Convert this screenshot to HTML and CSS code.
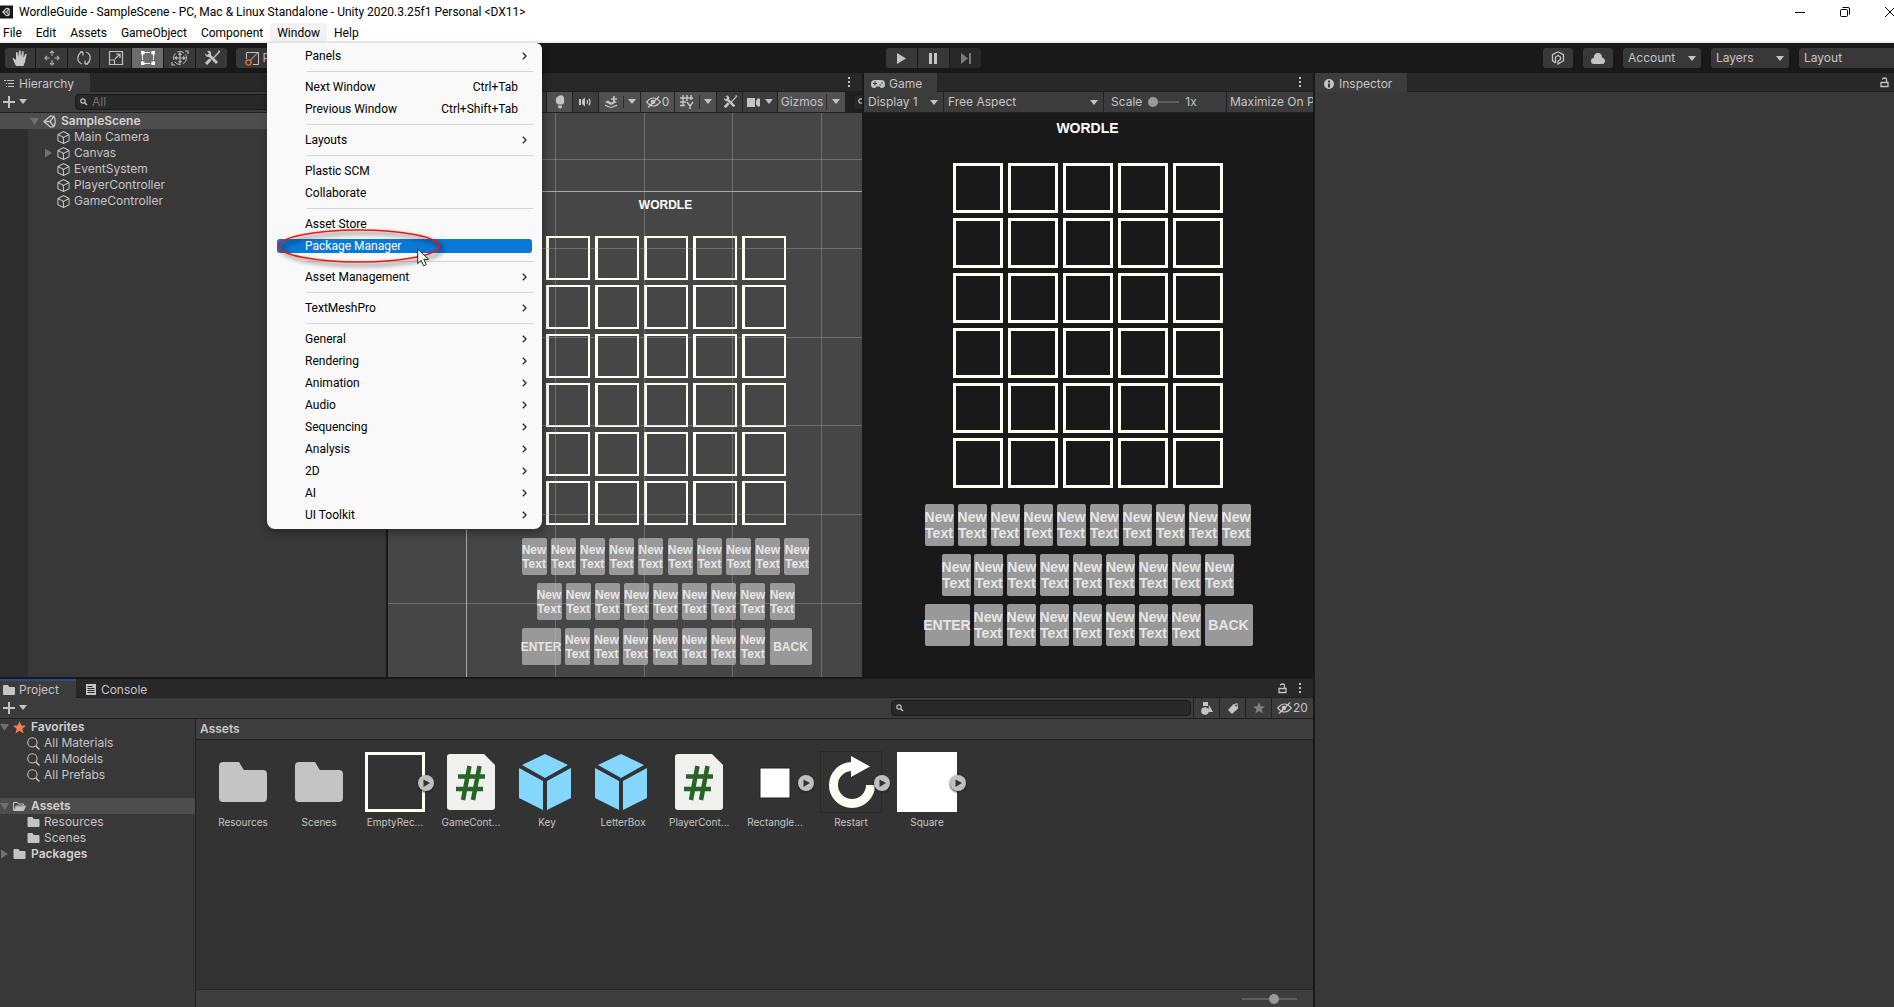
FILE: index.html
```html
<!DOCTYPE html>
<html lang="en">
<head>
<meta charset="utf-8">
<title>WordleGuide - SampleScene</title>
<link rel="stylesheet" href="styles.css">
</head>
<body>
<svg class="defs" aria-hidden="true">
  <symbol id="down" viewBox="0 0 8 6"><path d="M0 0h8L4 5z" fill="currentColor"/></symbol>
  <symbol id="fold-open" viewBox="0 0 10 10"><path d="M1 2h9L5.500 9z" fill="#707070"/></symbol>
  <symbol id="fold-shut" viewBox="0 0 10 10"><path d="M2 0.500v9L9 5z" fill="#707070"/></symbol>
  <symbol id="dots" viewBox="0 0 4 12"><path d="M1 1h2v2H1zM1 5h2v2H1zM1 9h2v2H1z" fill="currentColor"/></symbol>
  <symbol id="plus" viewBox="0 0 12 12"><path d="M6 0v12M0 6h12" stroke="currentColor" stroke-width="2"/></symbol>
  <symbol id="lock" viewBox="0 0 9 11"><path d="M1 5.500h7v4H1zM6.500 5.500v-3Q6.500 1 4.500 1T2.500 2.500" fill="none" stroke="currentColor" stroke-width="1.300"/></symbol>
  <symbol id="cube" viewBox="0 0 14 14"><path d="M7 .6l6 3.200v6.600L7 13.500 1 10.400V3.800zM1 3.800L7 7l6-3.200M7 7v6.500" fill="none" stroke="currentColor" stroke-width="1.100"/></symbol>
  <symbol id="unity" viewBox="0 0 14 14"><path d="M11.800 1.500L8 1 1 7l7 6 3.800-.5L13 9V5zM1 7h6.500M7.500 7l4.300-5.500M7.500 7l4.300 5.500" fill="none" stroke="currentColor" stroke-width="1.500"/></symbol>
  <symbol id="folder" viewBox="0 0 12 10"><path d="M0 1q0-1 1-1h4l1.200 2H11q1 0 1 1v6q0 1-1 1H1q-1 0-1-1z" fill="currentColor"/></symbol>
  <symbol id="folder-open" viewBox="0 0 13 10"><path d="M.5 9V1h4l1 1.500h5V4M1 9l2-4.500h9.500L10.500 9z" fill="none" stroke="currentColor"/><path d="M3.500 5h9l-2 4h-9z" fill="currentColor"/></symbol>
  <symbol id="mag" viewBox="0 0 12 12"><circle cx="5" cy="5" r="4.300" fill="none" stroke="currentColor"/><path d="M8 8l3.500 3.500" stroke="currentColor" stroke-width="1.400"/></symbol>
  <symbol id="find" viewBox="0 0 10 8"><circle cx="3" cy="3" r="2.200" fill="none" stroke="currentColor" stroke-width="1.200"/><path d="M4.500 4.500L7 7" stroke="currentColor" stroke-width="1.500"/></symbol>
  <symbol id="star" viewBox="0 0 12 12"><path d="M6 0l1.700 4.200 4.300.2-3.400 2.700L9.800 11.500 6 9 2.200 11.500l1.200-4.400L0 4.400l4.300-.2z" fill="currentColor"/></symbol>
  <symbol id="eye" viewBox="0 0 15 12"><path d="M.7 6Q4 2 7.500 2T14.300 6Q11 10 7.500 10T.7 6z" fill="none" stroke="currentColor" stroke-width="1.200"/><circle cx="7" cy="6" r="2.300" fill="currentColor"/><path d="M2 11.500L13 .5" stroke="currentColor" stroke-width="1.400"/></symbol>
  <symbol id="wrench" viewBox="0 0 16 16"><path d="M4.500 4.500l8.500 8.500" stroke="currentColor" stroke-width="2.800"/><path d="M.8 3L3 5.200 5 3.200 3 1Q6-.2 7 2.500T5 7Q1.500 7.500.8 3z" fill="currentColor"/><path d="M14.500.5l1 1L9.500 8M6 10.500L2.500 14" fill="none" stroke="currentColor" stroke-width="1.300"/><path d="M6.500 9.200L2 14" stroke="currentColor" stroke-width="3"/></symbol>
  <symbol id="more" viewBox="0 0 16 16"><circle cx="8" cy="8" r="8" fill="#c0c0c0"/><path d="M5.500 4.500v7.500L12 8z" fill="#333"/></symbol>
  <symbol id="chev" viewBox="0 0 5 8"><path d="M.8.8L4 4 .8 7.200" fill="none" stroke="#333" stroke-width="1.400"/></symbol>
  <symbol id="script" viewBox="0 0 60 60"><path d="M6 5q0-3 3-3h34l11 11v42q0 3-3 3H9q-3 0-3-3z" fill="#f0f0ee"/><path d="M28.500 14L22 48M38.500 14L32 48M17 24.500h27M15 37h27" stroke="#286428" stroke-width="4.500" fill="none"/></symbol>
  <symbol id="prefab" viewBox="0 0 60 60"><path d="M28 2l23 11-23 13L5 13zM2 16l24 13v29L2 46zM54 16v30L30 58V29z" fill="#84d6fd"/></symbol>
</svg>

<header class="titlebar">
  <svg class="app-icon" viewBox="0 0 14 14"><path d="M0 0h14v14H0z" fill="#181818"/><path d="M9.500 3.500L7 3 3 7l4 4 2.500-.5.5-2V5.500zM3 7h4M7 7l2.500-3.500M7 7l2.500 3.500" fill="none" stroke="#ddd" stroke-width="1.100"/></svg>
  <h1>WordleGuide - SampleScene - PC, Mac &amp; Linux Standalone - Unity 2020.3.25f1 Personal &lt;DX11&gt;</h1>
  <div class="win-buttons">
    <button aria-label="Minimize"><svg width="10" height="10"><path d="M0 5.500h10" stroke="#000"/></svg></button>
    <button aria-label="Restore"><svg width="10" height="10" viewBox="0 0 10 10"><rect x=".5" y="2.500" width="7" height="7" rx="1" fill="none" stroke="#000"/><path d="M2.500.5H8Q9.500.5 9.500 2v5.500" fill="none" stroke="#000"/></svg></button>
    <button aria-label="Close"><svg width="10" height="10"><path d="M0 0l10 10M10 0L0 10" stroke="#000"/></svg></button>
  </div>
</header>

<nav class="menubar">
  <button>File</button><button>Edit</button><button>Assets</button><button>GameObject</button><button>Component</button><button class="open">Window</button><button>Help</button>
  <div class="menu" role="menu">
    <button><span>Panels</span><svg class="chev"><use href="#chev"/></svg></button>
    <hr>
    <button><span>Next Window</span><kbd>Ctrl+Tab</kbd></button>
    <button><span>Previous Window</span><kbd>Ctrl+Shift+Tab</kbd></button>
    <hr>
    <button><span>Layouts</span><svg class="chev"><use href="#chev"/></svg></button>
    <hr>
    <button><span>Plastic SCM</span></button>
    <button><span>Collaborate</span></button>
    <hr>
    <button><span>Asset Store</span></button>
    <button class="current"><span>Package Manager</span></button>
    <hr>
    <button><span>Asset Management</span><svg class="chev"><use href="#chev"/></svg></button>
    <hr>
    <button><span>TextMeshPro</span><svg class="chev"><use href="#chev"/></svg></button>
    <hr>
    <button><span>General</span><svg class="chev"><use href="#chev"/></svg></button>
    <button><span>Rendering</span><svg class="chev"><use href="#chev"/></svg></button>
    <button><span>Animation</span><svg class="chev"><use href="#chev"/></svg></button>
    <button><span>Audio</span><svg class="chev"><use href="#chev"/></svg></button>
    <button><span>Sequencing</span><svg class="chev"><use href="#chev"/></svg></button>
    <button><span>Analysis</span><svg class="chev"><use href="#chev"/></svg></button>
    <button><span>2D</span><svg class="chev"><use href="#chev"/></svg></button>
    <button><span>AI</span><svg class="chev"><use href="#chev"/></svg></button>
    <button><span>UI Toolkit</span><svg class="chev"><use href="#chev"/></svg></button>
    <svg class="callout" viewBox="0 0 176 44">
      <ellipse cx="85" cy="22" rx="80" ry="16" fill="none" stroke="#000" stroke-opacity=".3" stroke-width="4" class="soft"/>
      <ellipse cx="82" cy="19" rx="80" ry="16" fill="none" stroke="#f5140a" stroke-width="1.600"/>
    </svg>
    <svg class="pointer" viewBox="0 0 13 19"><path d="M.7 1v14.500l3.500-3.200 2.400 5.500 2.600-1.100-2.400-5.400h4.700z" fill="#fff" stroke="#222"/></svg>
  </div>
</nav>

<div class="toolbar">
  <div class="tools">
    <button aria-label="Hand"><svg width="16" height="16" viewBox="0 0 16 16"><path d="M4 16L1 9.500q-1-2 .5-1.500L4 10V3q0-1.500 1.500-1l.7 5L7 1q.7-1.500 1.600 0L9 7l1-5.500q1-1 1.600.3L11.500 8l1.700-4q1.300-.8 1.500.5L13 12l-1.500 4z" fill="#c8c8c8"/></svg></button>
    <button aria-label="Move"><svg width="16" height="16" viewBox="0 0 16 16"><path d="M8 1v5M8 10v5M1 8h5M10 8h5M6 3l2-2 2 2M6 13l2 2 2-2M3 6L1 8l2 2M13 6l2 2-2 2" fill="none" stroke="#a8a8a8" stroke-width="1.200"/></svg></button>
    <button aria-label="Rotate"><svg width="16" height="16" viewBox="0 0 16 16"><path d="M6 14Q1 12 2 7t5-5H4M7 2v3.500M10 2q5 2 4 7t-5 5h3M9 14v-3.500" fill="none" stroke="#b8b8b8" stroke-width="1.300"/></svg></button>
    <button aria-label="Scale"><svg width="16" height="16" viewBox="0 0 16 16"><path d="M1.500 1.500h13v13h-13zM1.500 10h5v4.500M7 9l4.500-4.500M8 4h4v4" fill="none" stroke="#c0c0c0" stroke-width="1.200"/></svg></button>
    <button aria-label="Rect" class="on"><svg width="16" height="16" viewBox="0 0 16 16"><path d="M2.500 4v8M13.500 4v8M4 2.500h8M4 13.500h8" stroke="#eee" stroke-dasharray="6 1"/><path d="M1 1h3.500v3.500H1zM11.500 1H15v3.500h-3.500zM1 11.500h3.500V15H1zM11.500 11.500H15V15h-3.500z" fill="#fff"/></svg></button>
    <button aria-label="Transform"><svg width="18" height="16" viewBox="0 0 18 16"><circle cx="9" cy="8" r="6.500" fill="none" stroke="#bbb" stroke-dasharray="7 2"/><path d="M9 3v10M4 8h10M7.500 5L9 3l1.500 2M7.500 11L9 13l1.500-2M6 6.500L4 8l2 1.500M12 6.500L14 8l-2 1.500M1 12v3h3M17 4V1h-3" fill="none" stroke="#bbb" stroke-width="1.200"/></svg></button>
    <button aria-label="Custom tools"><svg width="16" height="16"><use href="#wrench"/></svg></button>
  </div>
  <button class="pivot"><svg width="15" height="15" viewBox="0 0 15 15"><path d="M1.500 8V1.500h12v12H8M5 9.500l8-8" fill="none" stroke="#c0c0c0"/><circle cx="3.500" cy="11.500" r="2.600" fill="none" stroke="#f07040" stroke-width="1.300"/></svg>Pivot</button>
  <div class="play">
    <button aria-label="Play"><svg width="9" height="11"><path d="M0 0l9 5.500L0 11z" fill="#c4c4c4"/></svg></button>
    <button aria-label="Pause"><svg width="9" height="11"><path d="M0 0h3v11H0zM5 0h3v11H5z" fill="#c4c4c4"/></svg></button>
    <button aria-label="Step" class="off"><svg width="10" height="11"><path d="M0 0l7 5.500L0 11zM8 0h2v11H8z" fill="#7a7a7a"/></svg></button>
  </div>
  <div class="services">
    <button aria-label="Plastic SCM"><svg width="14" height="14" viewBox="0 0 14 14"><path d="M7 .7l5.500 3v6L7 13v-3M4.500 12l-3-2.300v-6L7 .7M4.500 12V6L7 4.500 9.500 6v2.500L7 10" fill="none" stroke="#c4c4c4" stroke-width="1.300"/></svg></button>
    <button aria-label="Cloud"><svg width="14" height="11" viewBox="0 0 14 11"><path d="M3 11Q0 11 0 8t2.800-3Q3 0 7 0t4 4.500q3 .5 3 3.500t-3 3z" fill="#c4c4c4"/></svg></button>
    <label class="pick"><select aria-label="Account"><option>Account</option></select><svg><use href="#down"/></svg></label>
    <label class="pick"><select aria-label="Layers"><option>Layers</option></select><svg><use href="#down"/></svg></label>
    <label class="pick last"><select aria-label="Layout"><option>Layout</option></select></label>
  </div>
</div>

<main class="workspace">
  <div class="left">
    <section class="panel hierarchy">
      <div class="tabs"><button class="tab on"><svg width="10" height="9" viewBox="0 0 10 9"><path d="M0 1.500h2M3 1.500h7M2 4.500h1M4 4.500h6M2 7.500h1M4 7.500h6" stroke="currentColor" stroke-width="1.200"/></svg>Hierarchy</button></div>
      <div class="bar"><button class="add" aria-label="Create"><svg width="12" height="12"><use href="#plus"/></svg><svg class="down"><use href="#down"/></svg></button>
        <label class="search"><svg width="10" height="8"><use href="#find"/></svg><input type="text" placeholder="All" aria-label="Search hierarchy"></label></div>
      <ul class="tree scene-tree">
        <li class="sel"><svg class="fold"><use href="#fold-open"/></svg><svg class="ic"><use href="#unity"/></svg><b>SampleScene</b></li>
        <li class="sub"><svg class="ic"><use href="#cube"/></svg>Main Camera</li>
        <li class="sub has"><svg class="fold"><use href="#fold-shut"/></svg><svg class="ic"><use href="#cube"/></svg>Canvas</li>
        <li class="sub"><svg class="ic"><use href="#cube"/></svg>EventSystem</li>
        <li class="sub"><svg class="ic"><use href="#cube"/></svg>PlayerController</li>
        <li class="sub"><svg class="ic"><use href="#cube"/></svg>GameController</li>
      </ul>
    </section>

    <section class="panel scene">
      <div class="tabs"><button class="dots" aria-label="Scene menu"><svg><use href="#dots"/></svg></button></div>
      <div class="bar scene-bar">
        <button class="on w25" aria-label="Lighting"><svg width="10" height="14" viewBox="0 0 10 14"><path d="M3 9.500Q.5 7.500.8 4.500T5 .5t4.200 4T7 9.500zM3 10.500h4v2H6V13.500H4v-1H3z" fill="currentColor"/></svg></button>
        <button class="w25" aria-label="Audio"><svg width="13" height="10" viewBox="0 0 13 10"><path d="M0 2h2v6H0zM3 3l3-2.500v9L3 7z" fill="currentColor"/><path d="M8 3q1 2 0 4M10 1.500q2 3.500 0 7" fill="none" stroke="currentColor" stroke-width="1.300"/></svg></button>
        <button class="on split" aria-label="Effects"><span><svg width="13" height="12" viewBox="0 0 13 12"><path d="M0 6l3-1.500L6 6.500l4-1.500 2 1-6 3zM0 8.500L6 11l6-2.500V10l-6 2-6-2z" fill="currentColor"/><path d="M9 0v6M6 3h6" stroke="currentColor" stroke-width="1.700"/></svg></span><svg class="down"><use href="#down"/></svg></button>
        <button class="on w33"><svg width="15" height="12"><use href="#eye"/></svg>0</button>
        <button class="on split" aria-label="Grid"><span><svg width="14" height="14" viewBox="0 0 14 14"><path d="M3 0v11M7 0v6M11 0v5M0 3h13M0 7h6M0 10.500h5M7 7l3 4 3-4M10 11v3" fill="none" stroke="currentColor" stroke-width="1.400"/></svg></span><svg class="down"><use href="#down"/></svg></button>
        <button class="w25" aria-label="Component tools"><svg width="14" height="14"><use href="#wrench"/></svg></button>
        <button class="w34" aria-label="Camera"><svg width="13" height="9" viewBox="0 0 13 9"><path d="M0 0h8v9H0zM9 3l1.500-2.500H13v8h-2.500L9 6z" fill="currentColor"/></svg><svg class="down"><use href="#down"/></svg></button>
        <button class="on split giz"><span>Gizmos</span><svg class="down"><use href="#down"/></svg></button>
        <label class="search"><svg width="10" height="8"><use href="#find"/></svg><input type="text" aria-label="Search scene"></label>
      </div>
      <div class="view">
        <div class="wordle small">
          <h2>WORDLE</h2>
          <div class="board"><i></i><i></i><i></i><i></i><i></i><i></i><i></i><i></i><i></i><i></i><i></i><i></i><i></i><i></i><i></i><i></i><i></i><i></i><i></i><i></i><i></i><i></i><i></i><i></i><i></i><i></i><i></i><i></i><i></i><i></i></div>
          <div class="keys">
            <div class="r1"><button>New<br>Text</button><button>New<br>Text</button><button>New<br>Text</button><button>New<br>Text</button><button>New<br>Text</button><button>New<br>Text</button><button>New<br>Text</button><button>New<br>Text</button><button>New<br>Text</button><button>New<br>Text</button></div>
            <div class="r2"><button>New<br>Text</button><button>New<br>Text</button><button>New<br>Text</button><button>New<br>Text</button><button>New<br>Text</button><button>New<br>Text</button><button>New<br>Text</button><button>New<br>Text</button><button>New<br>Text</button></div>
            <div class="r3"><button class="enter">ENTER</button><button>New<br>Text</button><button>New<br>Text</button><button>New<br>Text</button><button>New<br>Text</button><button>New<br>Text</button><button>New<br>Text</button><button>New<br>Text</button><button class="back">BACK</button></div>
          </div>
        </div>
        <svg class="grid-lines"><path d="M167.500 0v600M256.500 0v600M344.500 0v600M433.500 0v600M0 46.500h700M0 135.500h700M0 224.500h700M0 312.500h700M0 401.500h700M0 490.500h700" stroke="#b4b4b4" stroke-opacity=".36"/></svg>
      </div>
    </section>

    <section class="panel game">
      <div class="tabs"><button class="tab on"><svg width="14" height="8" viewBox="0 0 14 8"><path d="M4 0h6q4 0 4 4t-3 4q-1.500 0-2.500-1.500h-3Q4.500 8 3 8 0 8 0 4t4-4z" fill="currentColor"/><path d="M2 3.500h4M4 1.500v4M8.500 5h1.500M10.500 3H12" stroke="#3c3c3c" stroke-width="1.200"/></svg>Game</button><button class="dots" aria-label="Game menu"><svg><use href="#dots"/></svg></button></div>
      <div class="bar game-bar">
        <label class="pick display"><select aria-label="Display"><option>Display 1</option></select><svg><use href="#down"/></svg></label>
        <label class="pick aspect"><select aria-label="Aspect"><option>Free Aspect</option></select><svg><use href="#down"/></svg></label>
        <label class="scale">Scale<input type="range" min="0" max="100" value="0"><output>1x</output></label>
        <button class="maximize">Maximize On Play</button>
      </div>
      <div class="view">
        <div class="wordle">
          <h2>WORDLE</h2>
          <div class="board"><i></i><i></i><i></i><i></i><i></i><i></i><i></i><i></i><i></i><i></i><i></i><i></i><i></i><i></i><i></i><i></i><i></i><i></i><i></i><i></i><i></i><i></i><i></i><i></i><i></i><i></i><i></i><i></i><i></i><i></i></div>
          <div class="keys">
            <div class="r1"><button>New<br>Text</button><button>New<br>Text</button><button>New<br>Text</button><button>New<br>Text</button><button>New<br>Text</button><button>New<br>Text</button><button>New<br>Text</button><button>New<br>Text</button><button>New<br>Text</button><button>New<br>Text</button></div>
            <div class="r2"><button>New<br>Text</button><button>New<br>Text</button><button>New<br>Text</button><button>New<br>Text</button><button>New<br>Text</button><button>New<br>Text</button><button>New<br>Text</button><button>New<br>Text</button><button>New<br>Text</button></div>
            <div class="r3"><button class="enter">ENTER</button><button>New<br>Text</button><button>New<br>Text</button><button>New<br>Text</button><button>New<br>Text</button><button>New<br>Text</button><button>New<br>Text</button><button>New<br>Text</button><button class="back">BACK</button></div>
          </div>
        </div>
      </div>
    </section>

    <section class="panel project">
      <div class="tabs">
        <button class="tab on focus"><svg width="12" height="10"><use href="#folder"/></svg>Project</button>
        <button class="tab"><svg width="10" height="11" viewBox="0 0 10 11"><path d="M0 0h10v11H0z" fill="currentColor"/><path d="M1.500 2.500h5M1.500 4.500h7M1.500 6.500h7M1.500 8.500h7" stroke="#282828"/></svg>Console</button>
        <button class="dots lock" aria-label="Lock"><svg width="9" height="11"><use href="#lock"/></svg></button>
        <button class="dots" aria-label="Project menu"><svg><use href="#dots"/></svg></button>
      </div>
      <div class="bar"><button class="add" aria-label="Create asset"><svg width="12" height="12"><use href="#plus"/></svg><svg class="down"><use href="#down"/></svg></button>
        <label class="search"><svg width="10" height="8"><use href="#find"/></svg><input type="text" aria-label="Search project"></label>
        <div class="filters">
          <button aria-label="Search by type"><svg width="12" height="13" viewBox="0 0 12 13"><path d="M2 0h5v4H2zM8 3l4 7H7z" fill="currentColor"/><circle cx="4" cy="9" r="3.800" fill="currentColor"/></svg></button>
          <button aria-label="Search by label"><svg width="10" height="11" viewBox="0 0 10 11"><path d="M5 1.500L9.500 0 10 5.500 4 11 0 7z" fill="currentColor"/><circle cx="8" cy="2.500" r=".9" fill="#3c3c3c"/></svg></button>
          <button aria-label="Save search" class="dim"><svg width="12" height="12"><use href="#star"/></svg></button>
          <button class="count"><svg width="15" height="12"><use href="#eye"/></svg>20</button>
        </div>
      </div>
      <div class="browser">
        <ul class="tree">
          <li><svg class="fold"><use href="#fold-open"/></svg><svg class="ic orange"><use href="#star"/></svg><b>Favorites</b></li>
          <li class="sub"><svg class="ic"><use href="#mag"/></svg>All Materials</li>
          <li class="sub"><svg class="ic"><use href="#mag"/></svg>All Models</li>
          <li class="sub"><svg class="ic"><use href="#mag"/></svg>All Prefabs</li>
          <li class="sel group"><svg class="fold"><use href="#fold-open"/></svg><svg class="ic"><use href="#folder-open"/></svg><b>Assets</b></li>
          <li class="sub"><svg class="ic folder"><use href="#folder"/></svg>Resources</li>
          <li class="sub"><svg class="ic folder"><use href="#folder"/></svg>Scenes</li>
          <li><svg class="fold"><use href="#fold-shut"/></svg><svg class="ic folder"><use href="#folder"/></svg><b>Packages</b></li>
        </ul>
        <div class="content">
          <div class="crumb">Assets</div>
          <div class="assets">
            <figure><svg class="thumb pad"><use href="#folder"/></svg><figcaption>Resources</figcaption></figure>
            <figure><svg class="thumb pad"><use href="#folder"/></svg><figcaption>Scenes</figcaption></figure>
            <figure><div class="thumb frame"></div><svg class="more"><use href="#more"/></svg><figcaption>EmptyRec...</figcaption></figure>
            <figure><svg class="thumb"><use href="#script"/></svg><figcaption>GameCont...</figcaption></figure>
            <figure><svg class="thumb"><use href="#prefab"/></svg><figcaption>Key</figcaption></figure>
            <figure><svg class="thumb"><use href="#prefab"/></svg><figcaption>LetterBox</figcaption></figure>
            <figure><svg class="thumb"><use href="#script"/></svg><figcaption>PlayerCont...</figcaption></figure>
            <figure><svg class="thumb" viewBox="0 0 60 60"><rect x="15" y="16" width="30" height="30" fill="#fff" stroke="#222"/></svg><svg class="more"><use href="#more"/></svg><figcaption>Rectangle...</figcaption></figure>
            <figure><svg class="thumb edge" viewBox="0 0 60 60"><path d="M31 14.500A18.500 18.500 0 1 0 49.500 33" fill="none" stroke="#fffff5" stroke-width="9"/><path d="M30 4l19 10.500L30 25z" fill="#fff"/></svg><svg class="more"><use href="#more"/></svg><figcaption>Restart</figcaption></figure>
            <figure><div class="thumb solid"></div><svg class="more"><use href="#more"/></svg><figcaption>Square</figcaption></figure>
          </div>
          <div class="footer"><input type="range" min="0" max="100" value="60" aria-label="Icon size"></div>
        </div>
      </div>
    </section>
  </div>

  <section class="panel inspector">
    <div class="tabs"><button class="tab on"><svg width="10" height="10" viewBox="0 0 10 10"><circle cx="5" cy="5" r="5" fill="currentColor"/><path d="M4 1.500h2v2H4zM4 4.500h2v4H4z" fill="#3c3c3c"/></svg>Inspector</button><button class="dots lock" aria-label="Lock inspector"><svg width="9" height="11"><use href="#lock"/></svg></button></div>
  </section>
</main>
</body>
</html>
```
FILE: styles.css
```css
* { box-sizing: border-box; margin: 0; padding: 0; }
body {
  display: flex;
  flex-direction: column;
  height: 100vh;
  overflow: hidden;
  background: #191919;
  color: #c4c4c4;
  font: 12px/16px Inter, "Liberation Sans", sans-serif;
}
button, input, select { border: 0; background: none; color: inherit; font: inherit; }
button { display: flex; align-items: center; justify-content: center; white-space: nowrap; }
svg { display: block; flex: none; }
.defs { position: absolute; width: 0; height: 0; }
ul { list-style: none; }
b { font-weight: 600; color: #d2d2d2; }

/* Window title and menus */
.titlebar, .menubar {
  flex: none;
  display: flex;
  background: #fff;
  color: #000;
  font: 12px/16px Roboto, "Open Sans", sans-serif;
}
.titlebar { height: 23px; align-items: center; overflow: hidden; }
.titlebar h1 { flex: 1; font-size: 12px; font-weight: 400; white-space: nowrap; padding-left: 6px; }
.app-icon { width: 13px; height: 14px; }
.win-buttons { display: flex; margin-right: -18px; }
.win-buttons button { width: 45px; height: 20px; }
.menubar { position: relative; height: 20px; border-bottom: 2px solid #f0f0f0; z-index: 2; }
.menubar > button { padding: 1px 7px 0; height: 18px; }
.menubar > button:first-child { padding-left: 3px; }
.menubar > .open { background: #f2f2f2; border-radius: 3px; }
.menu {
  position: absolute;
  left: 267px;
  top: 20px;
  display: flex;
  flex-direction: column;
  width: 275px;
  padding: 2px 0 3px;
  background: #f9f9f9;
  border-radius: 0 6px 8px 8px;
  box-shadow: 2px 4px 8px rgba(0, 0, 0, .35);
}
.menu button { height: 14px; margin: 4px 10px; padding: 0 5px 0 28px; border-radius: 3px; justify-content: flex-start; }
.menu hr { height: 1px; border: 0; background: #d4d4d4; margin: 4px 9px 4px 40px; }
.menu span { flex: 1; text-align: left; }
.menu kbd { font: inherit; margin-right: 9px; }
.menu .current { background: #0a78d6; color: #fff; }
.chev { width: 5px; height: 8px; }
.callout { position: absolute; left: 10px; top: 184px; width: 176px; height: 44px; }
.callout .soft { filter: blur(2px); }
.pointer { position: absolute; left: 150px; top: 205px; width: 13px; height: 19px; }

/* Main toolbar */
.toolbar { flex: none; display: grid; grid-template-columns: auto auto minmax(0, 1fr) auto; height: 30px; padding: 5px 0; }
.tools, .play, .services { display: flex; }
.tools { gap: 1px; padding-left: 5px; }
.tools button { width: 30px; height: 20px; background: #383838; }
.tools button:nth-child(n + 2) { width: 31px; }
.tools .on { background: #6c6c6c; }
.tools button:first-child, .play button:first-child { border-radius: 3px 0 0 3px; }
.tools button:last-child, .play button:last-child { border-radius: 0 3px 3px 0; }
.pivot { width: 64px; height: 20px; margin-left: 9px; background: #383838; border-radius: 3px; gap: 2px; }
.play { gap: 1px; justify-self: center; margin-left: 24px; }
.play button { width: 31px; height: 20px; background: #383838; }
.play .off { background: #282828; }
.services { gap: 10px; }
.services > button { width: 30px; height: 20px; background: #383838; border-radius: 3px; }
.pick { position: relative; display: block; }
.pick select { appearance: none; width: 100%; height: 100%; padding: 0 4px; }
.pick svg { position: absolute; right: 5px; top: 8px; width: 8px; height: 6px; pointer-events: none; }
.services .pick { width: 78px; height: 20px; background: #383838; border-radius: 3px; }
.services .pick select { padding: 0 5px; }
.services .last { width: 95px; border-radius: 3px 0 0 3px; }

/* Docked panels */
.workspace { flex: 1; min-height: 0; display: grid; grid-template-columns: minmax(0, 1313fr) minmax(0, 579fr); gap: 2px; }
.left {
  min-height: 0;
  display: grid;
  grid-template-columns: minmax(0, 386fr) minmax(0, 474fr) minmax(0, 449fr);
  grid-template-rows: minmax(0, 604fr) minmax(0, 328fr);
  gap: 2px;
}
.panel { min-width: 0; min-height: 0; display: flex; flex-direction: column; background: #383838; overflow: hidden; }
.tabs { flex: none; display: flex; height: 19px; background: #282828; border-bottom: 1px solid #202020; }
.tab { height: 19px; padding: 2px 15px 0 3px; gap: 4px; }
.tab.on { background: #3c3c3c; }
.focus { box-shadow: inset 0 2px #254f8c; padding-right: 17px; }
.tab.focus + .tab { padding-left: 10px; gap: 5px; }
.dots { margin-left: auto; width: 26px; }
.dots svg { width: 4px; height: 12px; }
.dots.lock { width: 18px; }
.dots.lock svg { width: 9px; height: 11px; }
.dots.lock + .dots { margin-left: 0; width: 26px; }
.project .dots.lock { width: 9px; }
.bar { flex: none; display: flex; align-items: center; height: 21px; background: #3c3c3c; border-bottom: 1px solid #202020; }
.down { width: 8px; height: 6px; }
.add { gap: 4px; padding-left: 3px; }
.search { display: flex; align-items: center; height: 16px; padding: 0 6px 0 4px; gap: 2px; background: #282828; border: 1px solid #1a1a1a; border-radius: 4px; }
.search input { min-width: 0; width: 100%; outline: 0; }
.search input::placeholder { color: #747474; opacity: 1; }

.hierarchy .tab { padding-left: 4px; padding-right: 16px; gap: 5px; }
.hierarchy .search { flex: 1; margin: 0 4px 0 48px; }
.tree li { display: flex; align-items: center; height: 16px; white-space: nowrap; }
.tree .fold { width: 10px; height: 10px; margin-right: 4px; }
.tree .ic { width: 13px; height: 13px; margin-right: 4px; }
.tree .folder { height: 10px; }
.tree .orange { color: #f08054; }
.tree .sub { padding-left: 27px; }
.tree .sel { background: #4d4d4d; }
.tree b { padding-left: 1px; }
.scene-tree { flex: 1; background: linear-gradient(90deg, #2d2d2d 28px, #383838 28px); }
.scene-tree li { padding-left: 29px; }
.scene-tree .sub { padding-left: 57px; }
.scene-tree .has { padding-left: 43px; }

/* Scene view */
.scene-bar { padding-left: 159px; gap: 1px; align-items: stretch; background: #202020 linear-gradient(90deg, #3c3c3c 158px, transparent 158px); }
.scene-bar button { background: #3c3c3c; }
.scene-bar .on { background: #505050; }
.w25 { width: 25px; flex: none; }
.w33 { width: 33px; flex: none; gap: 1px; }
.w34 { width: 34px; flex: none; gap: 5px; }
.split { width: 41px; flex: none; }
.split span { flex: 1; display: flex; justify-content: center; border-right: 1px solid #2c2c2c; }
.split .down { margin: 0 4px; }
.giz { width: 67px; }
.giz .down { margin: 0 5px; }
.scene-bar .search { flex: 1; margin: 2px -20px 2px 7px; }
.scene .view { flex: 1; min-height: 0; position: relative; background: #464646; overflow: hidden; padding: 78px 0 0 78px; }
.grid-lines { position: absolute; left: 0; top: 0; width: 100%; height: 100%; pointer-events: none; }

/* Game view */
.game { background: #191919; }
.game-bar { align-items: stretch; }
.game-bar > * { border-right: 1px solid #202020; flex: none; }
.display { width: 80px; }
.aspect { width: 160px; }
.scale { display: flex; align-items: center; width: 123px; padding-left: 7px; gap: 6px; }
.scale input { width: 31px; }
.maximize { padding: 0 3px; }
input[type="range"] { appearance: none; height: 10px; background: linear-gradient(#5e5e5e, #5e5e5e) center / 100% 2px no-repeat; }
input[type="range"]::-webkit-slider-thumb { appearance: none; width: 10px; height: 10px; border-radius: 50%; background: #999; }
.game .view { flex: 1; min-height: 0; display: flex; justify-content: center; padding-right: 2px; }

/* Wordle canvas, shared by both views */
.wordle { display: flex; flex-direction: column; align-items: center; padding-top: 7px; font-family: "Liberation Sans", Arial, sans-serif; font-weight: 700; }
.wordle h2 { font-size: 14px; line-height: 16px; color: #fff; }
.board { display: grid; grid-template-columns: repeat(5, 50px); grid-auto-rows: 50px; gap: 5px; margin: 27px 0 16px; }
.board i { border: 3px solid #fffff5; }
.keys { display: flex; flex-direction: column; align-items: flex-start; width: 326px; gap: 8px; font-size: 14px; color: #e6e6e6; }
.keys div { display: flex; justify-content: space-between; height: 42px; }
.keys button { width: 29px; height: 100%; line-height: 16px; background: #999; border-radius: 2px; }
.keys .r1 { width: 326px; }
.keys .r2 { width: 292px; align-self: center; }
.keys .r3 { width: 328px; }
.keys .enter { width: 45px; }
.keys .back { width: 48px; }
.small { width: 398px; height: 600px; border: 1px solid #a8a8a8; border-width: 1px 0 0 1px; padding-top: 6px; }
.small h2 { font-size: 12px; line-height: 14px; }
.small .board { grid-template-columns: repeat(5, 44px); grid-auto-rows: 44px; margin: 24px 0 13px; }
.small .board i { border-width: 2px 2px 2px 3px; }
.small .keys { width: 288px; font-size: 12px; }
.small .keys div { height: 37px; }
.small .keys button { width: 25px; line-height: 14px; }
.small .keys .r1 { width: 288px; }
.small .keys .r2 { width: 258px; }
.small .keys .r3 { width: 290px; }
.small .keys .enter { width: 39px; }
.small .keys .back { width: 42px; }

/* Project browser */
.project { grid-column: 1 / -1; }
.project .search { width: 300px; margin-left: auto; }
.filters { display: flex; align-self: stretch; margin-left: 2px; }
.filters button { width: 26px; border-left: 1px solid #202020; }
.filters .count { width: 42px; gap: 1px; }
.dim { color: #808080; }
.browser { flex: 1; min-height: 0; display: grid; grid-template-columns: 196px minmax(0, 1fr); }
.browser .tree { border-right: 1px solid #202020; }
.project .fold { margin: 0 4px 0 -1px; }
.group { margin-top: 15px; }
.content { min-height: 0; display: flex; flex-direction: column; background: #333; }
.crumb { height: 21px; line-height: 20px; padding-left: 4px; background: #3e3e3e; border-bottom: 1px solid #202020; font-weight: 600; color: #c8c8c8; }
.assets { flex: 1; min-height: 0; display: flex; flex-wrap: wrap; align-content: flex-start; gap: 16px; padding: 12px 17px; }
.assets figure { position: relative; width: 60px; }
.thumb { width: 60px; height: 60px; }
.pad { padding: 6px; }
.frame { border: 3px solid #fffff5; }
.solid { background: #fff; }
.edge { outline: 1px solid #2a2a2a; }
.more { position: absolute; right: -9px; top: 23px; width: 16px; height: 16px; filter: drop-shadow(0 1px 1px #222); }
figcaption { margin-top: 2px; font-size: 10px; text-align: center; white-space: nowrap; }
.footer { display: flex; justify-content: flex-end; align-items: center; height: 18px; background: #3e3e3e; border-top: 1px solid #282828; padding-right: 16px; }
.footer input { width: 55px; }

.inspector .tab { padding-left: 9px; gap: 5px; }
.inspector .lock { width: 20px; }
.game .tab { padding-left: 7px; }
```
